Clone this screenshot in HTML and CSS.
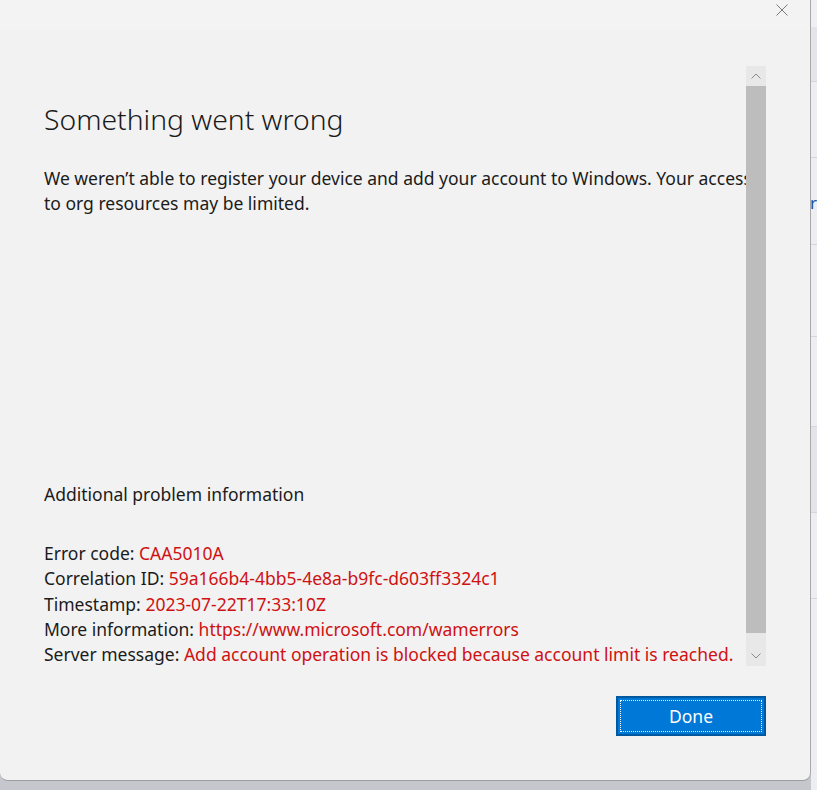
FILE: index.html
```html
<!DOCTYPE html>
<html lang="en">
<head>
    <meta charset="UTF-8">
    <title>Something went wrong</title>
    <link rel="stylesheet" href="styles.css">
</head>
<body>
    <div class="screen">
        <div class="dialog">
            <!-- title bar with close button -->
            <div class="title-bar">
                <button class="close-btn" aria-label="Close">
                    <svg width="12" height="12" viewBox="0 0 12 12">
                        <path d="M0.5 0.5 L11.5 11.5 M11.5 0.5 L0.5 11.5" stroke="#7a7a7a" stroke-width="1" fill="none"/>
                    </svg>
                </button>
            </div>

            <div class="main-area">
                <div class="content">
                    <h1>Something went wrong</h1>
                    <p class="message">We weren’t able to register your device and add your account to Windows. Your access<br>to org resources may be limited.</p>

                    <h2>Additional problem information</h2>
                    <div class="details">
                        <div>Error code: <span class="value">CAA5010A</span></div>
                        <div>Correlation ID: <span class="value">59a166b4-4bb5-4e8a-b9fc-d603ff3324c1</span></div>
                        <div>Timestamp: <span class="value">2023-07-22T17:33:10Z</span></div>
                        <div>More information: <span class="value">https://www.microsoft.com/wamerrors</span></div>
                        <div>Server message: <span class="value">Add account operation is blocked because account limit is reached.</span></div>
                    </div>
                </div>

                <!-- classic scrollbar -->
                <div class="scrollbar">
                    <div class="scroll-btn">
                        <svg width="10" height="6" viewBox="0 0 10 6"><path d="M0.5 5.5 L5 1 L9.5 5.5" stroke="#8a8a8a" fill="none"/></svg>
                    </div>
                    <div class="scroll-track"><div class="scroll-thumb"></div></div>
                    <div class="scroll-btn">
                        <svg width="10" height="6" viewBox="0 0 10 6"><path d="M0.5 0.5 L5 5 L9.5 0.5" stroke="#8a8a8a" fill="none"/></svg>
                    </div>
                </div>
            </div>

            <div class="footer">
                <button class="done-btn"><span>Done</span></button>
            </div>
        </div>

        <!-- strip of the window behind -->
        <div class="behind">
            <div class="seg s1"></div>
            <div class="seg s2"></div>
            <div class="seg s3"></div>
            <div class="seg s4"><span class="link-bit">r</span></div>
            <div class="seg s5"></div>
            <div class="seg s6"></div>
            <div class="seg s7"></div>
            <div class="seg s8"></div>
            <div class="seg s9"></div>
        </div>
    </div>
</body>
</html>
```

FILE: styles.css
```css
body {
    margin: 0;
    background-color: #c6c7cc;
    font-family: 'Segoe UI', 'Noto Sans', 'Open Sans', sans-serif;
    color: #1b1b1b;
    overflow: hidden;
}
.screen {
    display: flex;
    align-items: flex-start;
    width: 817px;
    height: 790px;
}
.dialog {
    width: 811px;
    height: 781px;
    flex: none;
    box-sizing: border-box;
    background-color: #f2f2f2;
    border-right: 1px solid #a9a9ab;
    border-bottom: 1px solid #9d9da0;
    border-bottom-left-radius: 8px;
    border-bottom-right-radius: 8px;
    display: flex;
    flex-direction: column;
    overflow: hidden;
}
.title-bar {
    height: 30px;
    background-color: #f3f3f3;
    display: flex;
    justify-content: flex-end;
    align-items: flex-start;
}
.close-btn {
    border: none;
    background: none;
    padding: 0;
    margin: 4px 22px 0 0;
    width: 12px;
    height: 12px;
    display: flex;
}
.main-area {
    margin-top: 36px;
    margin-left: 44px;
    width: 722px;
    height: 600px;
    display: flex;
}
.content {
    width: 702px;
    overflow: hidden;
}
.content > * {
    width: 800px;
}
h1 {
    margin: 33px 0 0;
    font-size: 28.3px;
    font-weight: 300;
    line-height: 40px;
}
.message {
    margin: 27px 0 0;
    font-size: 17.5px;
    line-height: 25px;
}
h2 {
    margin: 266px 0 0;
    font-size: 17.5px;
    font-weight: 400;
    line-height: 25px;
}
.details {
    margin-top: 34px;
    font-size: 17.5px;
    line-height: 25.25px;
    white-space: nowrap;
}
.details .value {
    color: #cf1111;
}
.scrollbar {
    width: 20px;
    display: flex;
    flex-direction: column;
    background-color: #e8e8e8;
}
.scroll-btn {
    height: 20px;
    display: flex;
    align-items: center;
    justify-content: center;
}
.scroll-track {
    flex: 1;
    padding-bottom: 13px;
    display: flex;
}
.scroll-thumb {
    flex: 1;
    background-color: #bdbdbd;
}
.footer {
    margin-top: 30px;
    display: flex;
    justify-content: flex-end;
    padding-right: 44px;
}
.done-btn {
    width: 150px;
    height: 40px;
    box-sizing: border-box;
    border: 2px solid #00589e;
    background-color: #0078d7;
    padding: 2px;
    font-family: inherit;
    font-size: 17.5px;
    color: #fff;
    display: flex;
}
.done-btn span {
    flex: 1;
    border: 1px dotted #fff;
    display: flex;
    align-items: center;
    justify-content: center;
}
/* background window strip */
.behind {
    flex: 1;
    height: 790px;
    display: flex;
    flex-direction: column;
    background-color: #eceef2;
}
.seg {
    flex: none;
    box-sizing: border-box;
    border-bottom: 1px solid #d3d6dd;
    overflow: hidden;
}
.s1 { height: 27px; background-color: #eef0f3; border-bottom: none; }
.s2 { height: 55px; background-color: #e3e5ea; }
.s3 { height: 76px; }
.s4 { height: 87px; }
.s5 { height: 92px; }
.s6 { height: 90px; }
.s7 { height: 86px; background-color: #e2e4ea; }
.s8 { height: 86px; }
.s9 { height: 110px; border-bottom: none; }
.s4 .link-bit {
    display: block;
    margin-top: 35px;
    margin-left: -1px;
    font-size: 17px;
    line-height: 20px;
    color: #1a4fa0;
}
```
